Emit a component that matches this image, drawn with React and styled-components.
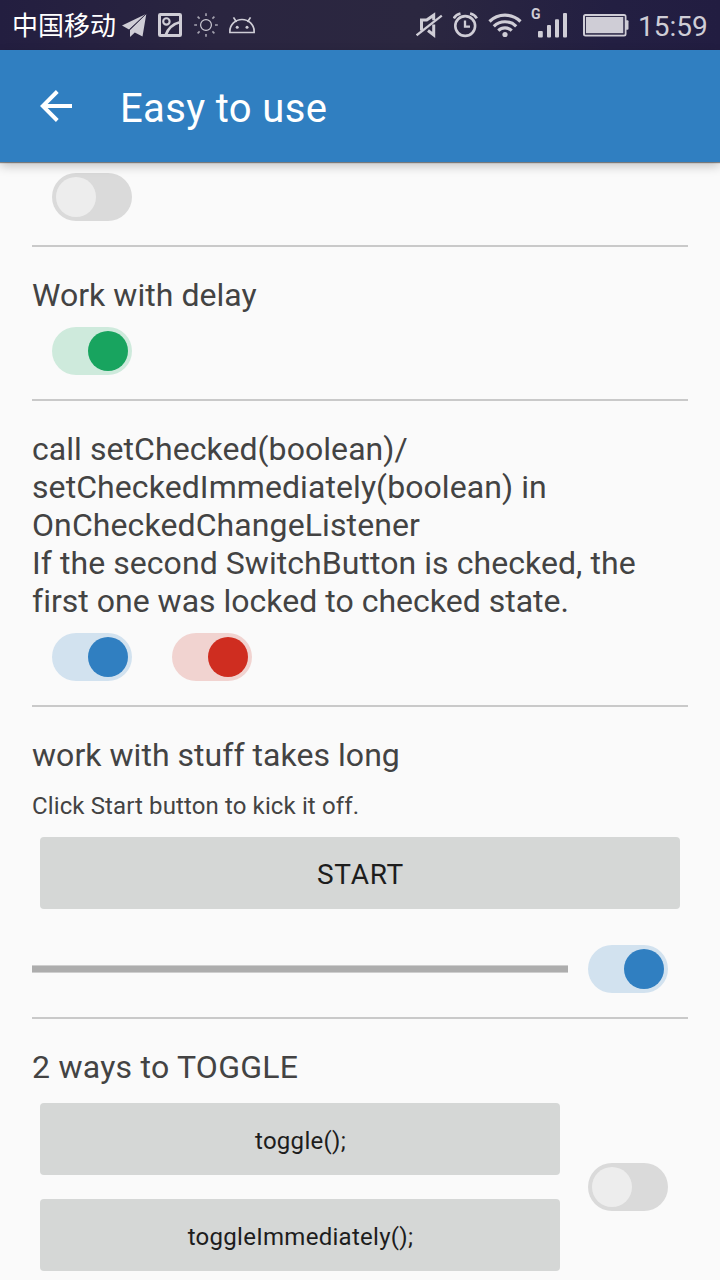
import React, { useState } from "react";
import styled, { createGlobalStyle } from "styled-components";

const GlobalStyle = createGlobalStyle`
  *, *::before, *::after { box-sizing: border-box; }
  html, body { margin: 0; padding: 0; }
  body {
    height: 1280px;
    overflow: hidden;
    background: #fafafa;
    font-family: Roboto, "Noto Sans CJK SC", sans-serif;
  }
`;

const Screen = styled.div`
  width: 720px;
  height: 1280px;
  display: flex;
  flex-direction: column;
  overflow: hidden;
  background: #fafafa;
`;

const StatusBar = styled.header`
  flex: none;
  height: 50px;
  padding: 0 12px;
  display: flex;
  justify-content: space-between;
  align-items: flex-start;
  background: linear-gradient(90deg, #231e40 0%, #2a2540 30%, #2b2740 58%, #231f42 85%, #221d41 100%);
  color: #cfcdd6;
`;

const StatusGroup = styled.div`
  display: flex;
  align-items: flex-start;
  height: 50px;
`;

const Carrier = styled.span`
  width: 104px;
  margin-right: 6px;
  font-size: 26px;
  line-height: 52px;
  color: #ffffff;
`;

const Clock = styled.span`
  width: 70px;
  margin-left: 9px;
  font-size: 28px;
  line-height: 53px;
`;

const StatusIcon = styled.svg`
  display: block;
  flex: none;
  width: ${(p) => p.$w}px;
  height: 50px;
  margin-left: ${(p) => p.$gap || 0}px;
  fill: none;
  stroke: currentColor;
`;

const NetworkType = styled.span`
  width: 10px;
  margin-left: 9px;
  font-size: 14px;
  font-weight: 700;
  line-height: 29px;
`;

const AppBar = styled.div`
  flex: none;
  z-index: 1;
  height: 112px;
  padding-left: 40px;
  display: flex;
  align-items: center;
  background: #307fc1;
  color: #ffffff;
  box-shadow: 0 1px 1px rgba(0, 0, 0, 0.42), 0 4px 10px rgba(0, 0, 0, 0.22);
`;

const BackButton = styled.button`
  width: 32px;
  height: 32px;
  padding: 0;
  border: 0;
  background: none;
  color: inherit;

  svg { display: block; }
`;

const PageTitle = styled.h1`
  margin: 6px 0 0 48px;
  font-size: 40px;
  font-weight: 400;
  line-height: 48px;
  letter-spacing: 0.36px;
`;

const Content = styled.main`
  padding: 11px 32px 0;
  display: flex;
  flex-direction: column;
`;

const Section = styled.section`
  flex: none;
  display: flex;
  flex-direction: column;
  padding-bottom: 24px;
  border-bottom: 2px solid #c9c9c9;

  & + & { padding-top: 29px; }
`;

const Heading = styled.h2`
  margin: 0 0 ${(p) => p.$gap ?? 13}px;
  font-size: 32px;
  font-weight: 400;
  line-height: 38px;
  color: #434343;
  white-space: nowrap;
`;

const Line = styled.span`
  display: block;
  letter-spacing: ${(p) => p.$spacing || 0}px;
`;

const Hint = styled.p`
  margin: 0 0 17px;
  font-size: 24px;
  line-height: 28px;
  letter-spacing: 0.12px;
  color: #434343;
`;

const SwitchRow = styled.div`
  display: flex;
  gap: 40px;
  padding-left: 20px;
`;

const Track = styled.button`
  flex: none;
  display: flex;
  align-items: center;
  justify-content: ${(p) => (p.$on ? "flex-end" : "flex-start")};
  width: 80px;
  height: 48px;
  padding: 4px;
  border: 0;
  border-radius: 24px;
  background: ${(p) => (p.$on ? p.$palette.track : "#dadada")};
`;

const Thumb = styled.span`
  width: 40px;
  height: 40px;
  border-radius: 50%;
  background: ${(p) => (p.$on ? p.$palette.thumb : "#ededed")};
`;

const ActionButton = styled.button`
  height: 72px;
  padding: ${(p) => (p.$large ? "2px" : "3px")} 0 0 1px;
  border: 0;
  border-radius: 4px;
  background: #d5d7d6;
  color: #1d1d1d;
  font-family: inherit;
  font-size: ${(p) => (p.$large ? 28 : 24)}px;
  letter-spacing: ${(p) => (p.$large ? 0.7 : 0.28)}px;
`;

const StartArea = styled.div`
  display: flex;
  flex-direction: column;
  padding: 0 8px;
  margin-bottom: 36px;
`;

const ProgressRow = styled.div`
  display: flex;
  align-items: center;
  gap: 20px;
  padding-right: 20px;
`;

const Progress = styled.div`
  flex: 1;
  height: 8px;
  border: solid #cecece;
  border-width: 1px 0;
  background: #adadad;
`;

const ToggleRow = styled.div`
  display: flex;
  align-items: center;
  gap: 28px;
  padding: 0 20px 0 8px;
`;

const ButtonStack = styled.div`
  flex: 1;
  display: flex;
  flex-direction: column;
  gap: 24px;
`;

const palettes = {
  green: { track: "#ceeadc", thumb: "#18a45f" },
  blue: { track: "#d2e2ef", thumb: "#307fc1" },
  red: { track: "#f1d3d0", thumb: "#cf2d20" },
};

function Switch({ color = "blue", on, onToggle }) {
  return (
    <Track $on={on} $palette={palettes[color]} onClick={onToggle} role="switch" aria-checked={on}>
      <Thumb $on={on} $palette={palettes[color]} />
    </Track>
  );
}

function StatusIconsLeft() {
  return (
    <>
      <StatusIcon $w={26} viewBox="0 0 26 50">
        <path d="M24 14 0 25.500l7 4z" fill="currentColor" stroke="none" />
        <path d="M24.300 14 8 30v7l4.800-4.600 7.700 4.100z" fill="currentColor" stroke="none" />
        <path d="M24 14 7.600 29.600" stroke="#2a2540" strokeWidth="0.800" />
      </StatusIcon>
      <StatusIcon $w={24} $gap={10} viewBox="0 0 24 50">
        <rect x="1.500" y="14.500" width="21" height="21" rx="0.800" strokeWidth="3" />
        <circle cx="8.400" cy="21.400" r="3.200" strokeWidth="2.100" />
        <path d="M7.500 35.500c2-6 7-11.500 15-13.500" strokeWidth="2.800" />
      </StatusIcon>
      <StatusIcon $w={24} $gap={12} viewBox="0 0 24 50">
        <circle cx="12" cy="25" r="5.400" strokeWidth="1.200" />
        <path
          d="M12 13.200v2.800M12 34v2.800M.2 25H3M21 25h2.800M3.600 16.600l2 2M18.400 31.400l2 2M20.400 16.600l-2 2M5.600 31.400l-2 2"
          strokeWidth="1.600"
          opacity=".75"
        />
      </StatusIcon>
      <StatusIcon $w={26} $gap={11} viewBox="0 0 26 50">
        <path d="M.9 32.500v-1.500a12.100 11.500 0 0 1 24.200 0v1.500z" strokeWidth="1.700" />
        <path d="M7.500 22 4.500 17.400M18.500 22l3-4.600" strokeWidth="1.700" />
        <circle cx="8.200" cy="27.300" r="1.500" fill="currentColor" stroke="none" />
        <circle cx="18" cy="27.300" r="1.500" fill="currentColor" stroke="none" />
      </StatusIcon>
    </>
  );
}

function StatusIconsRight() {
  return (
    <>
      <StatusIcon $w={27} viewBox="0 0 27 50">
        <path d="M5.500 30.500v-10.500h5.200l7-4.800v5" strokeWidth="3" />
        <path d="M12 30.500 17.700 35v-10.500" strokeWidth="3" />
        <path d="M.6 35.300 25.800 15.600" strokeWidth="2.200" />
      </StatusIcon>
      <StatusIcon $w={25} $gap={10} viewBox="0 0 25 50">
        <circle cx="12.200" cy="26" r="9.900" strokeWidth="2.600" />
        <path d="M12 20.500v6.200h5" strokeWidth="2.300" />
        <path d="M.8 18.300q2-3.800 6.700-4.900M23.800 18.300q-2-3.800-6.700-4.900" strokeWidth="2.600" />
      </StatusIcon>
      <StatusIcon $w={34} $gap={10} viewBox="0 0 34 50">
        <path d="M1.500 21.500a22 22 0 0 1 31 0" strokeWidth="3.200" />
        <path d="M5.800 26.300a16 16 0 0 1 22.400 0" strokeWidth="3.200" />
        <path d="M10.300 30.600a9.700 9.700 0 0 1 13.400 0" strokeWidth="3.200" />
        <circle cx="17" cy="34.500" r="2.600" fill="currentColor" stroke="none" />
      </StatusIcon>
      <NetworkType>G</NetworkType>
      <StatusIcon $w={30} $gap={-3} viewBox="0 0 30 50">
        <g fill="currentColor" stroke="none">
          <rect x="0" y="31" width="4.800" height="6.500" rx="1" />
          <rect x="9" y="25" width="4" height="12.500" rx="1" />
          <rect x="17" y="19.300" width="4" height="18.200" rx="1" />
          <rect x="25" y="13" width="4" height="24.500" rx="1" />
        </g>
      </StatusIcon>
      <StatusIcon $w={46} $gap={15} viewBox="0 0 46 50">
        <rect x="1" y="15" width="41.500" height="20.400" rx="1.500" strokeWidth="2" />
        <rect x="3" y="17" width="37.500" height="16.400" fill="currentColor" stroke="none" />
        <rect x="42.500" y="20.300" width="3" height="9.500" rx="1" fill="currentColor" stroke="none" />
        <rect x="2.500" y="16.500" width="38.500" height="17.400" stroke="#332f4c" strokeWidth="1" />
      </StatusIcon>
    </>
  );
}

export default function App() {
  const [state, setState] = useState({ top: false, delay: true, first: true, second: true, work: true, toggle: false });
  const flip = (key) => () => setState((s) => ({ ...s, [key]: !s[key] }));

  return (
    <>
      <GlobalStyle />
      <Screen>
        <StatusBar>
          <StatusGroup>
            <Carrier>中国移动</Carrier>
            <StatusIconsLeft />
          </StatusGroup>
          <StatusGroup>
            <StatusIconsRight />
            <Clock>15:59</Clock>
          </StatusGroup>
        </StatusBar>
        <AppBar>
          <BackButton aria-label="Back">
            <svg width="32" height="32" viewBox="0 0 32 32" fill="none" stroke="currentColor" strokeWidth="3.900">
              <path d="M32 16H4M17.300 1.500 2.800 16l14.500 14.500" />
            </svg>
          </BackButton>
          <PageTitle>Easy to use</PageTitle>
        </AppBar>
        <Content>
          <Section>
            <SwitchRow>
              <Switch on={state.top} onToggle={flip("top")} />
            </SwitchRow>
          </Section>
          <Section>
            <Heading>
              <Line $spacing={0.04}>Work with delay</Line>
            </Heading>
            <SwitchRow>
              <Switch color="green" on={state.delay} onToggle={flip("delay")} />
            </SwitchRow>
          </Section>
          <Section>
            <Heading>
              <Line $spacing={0.06}>call setChecked(boolean)/</Line>
              <Line $spacing={0.08}>setCheckedImmediately(boolean) in</Line>
              <Line $spacing={0.1}>OnCheckedChangeListener</Line>
              <Line $spacing={0.06}>If the second SwitchButton is checked, the</Line>
              <Line $spacing={0.01}>first one was locked to checked state.</Line>
            </Heading>
            <SwitchRow>
              <Switch on={state.first} onToggle={flip("first")} />
              <Switch color="red" on={state.second} onToggle={flip("second")} />
            </SwitchRow>
          </Section>
          <Section>
            <Heading $gap={18}>
              <Line $spacing={0.04}>work with stuff takes long</Line>
            </Heading>
            <Hint>Click Start button to kick it off.</Hint>
            <StartArea>
              <ActionButton $large>START</ActionButton>
            </StartArea>
            <ProgressRow>
              <Progress />
              <Switch on={state.work} onToggle={flip("work")} />
            </ProgressRow>
          </Section>
          <Section>
            <Heading $gap={17}>
              <Line $spacing={0.25}>2 ways to TOGGLE</Line>
            </Heading>
            <ToggleRow>
              <ButtonStack>
                <ActionButton onClick={flip("toggle")}>toggle();</ActionButton>
                <ActionButton onClick={flip("toggle")}>toggleImmediately();</ActionButton>
              </ButtonStack>
              <Switch on={state.toggle} onToggle={flip("toggle")} />
            </ToggleRow>
          </Section>
        </Content>
      </Screen>
    </>
  );
}
